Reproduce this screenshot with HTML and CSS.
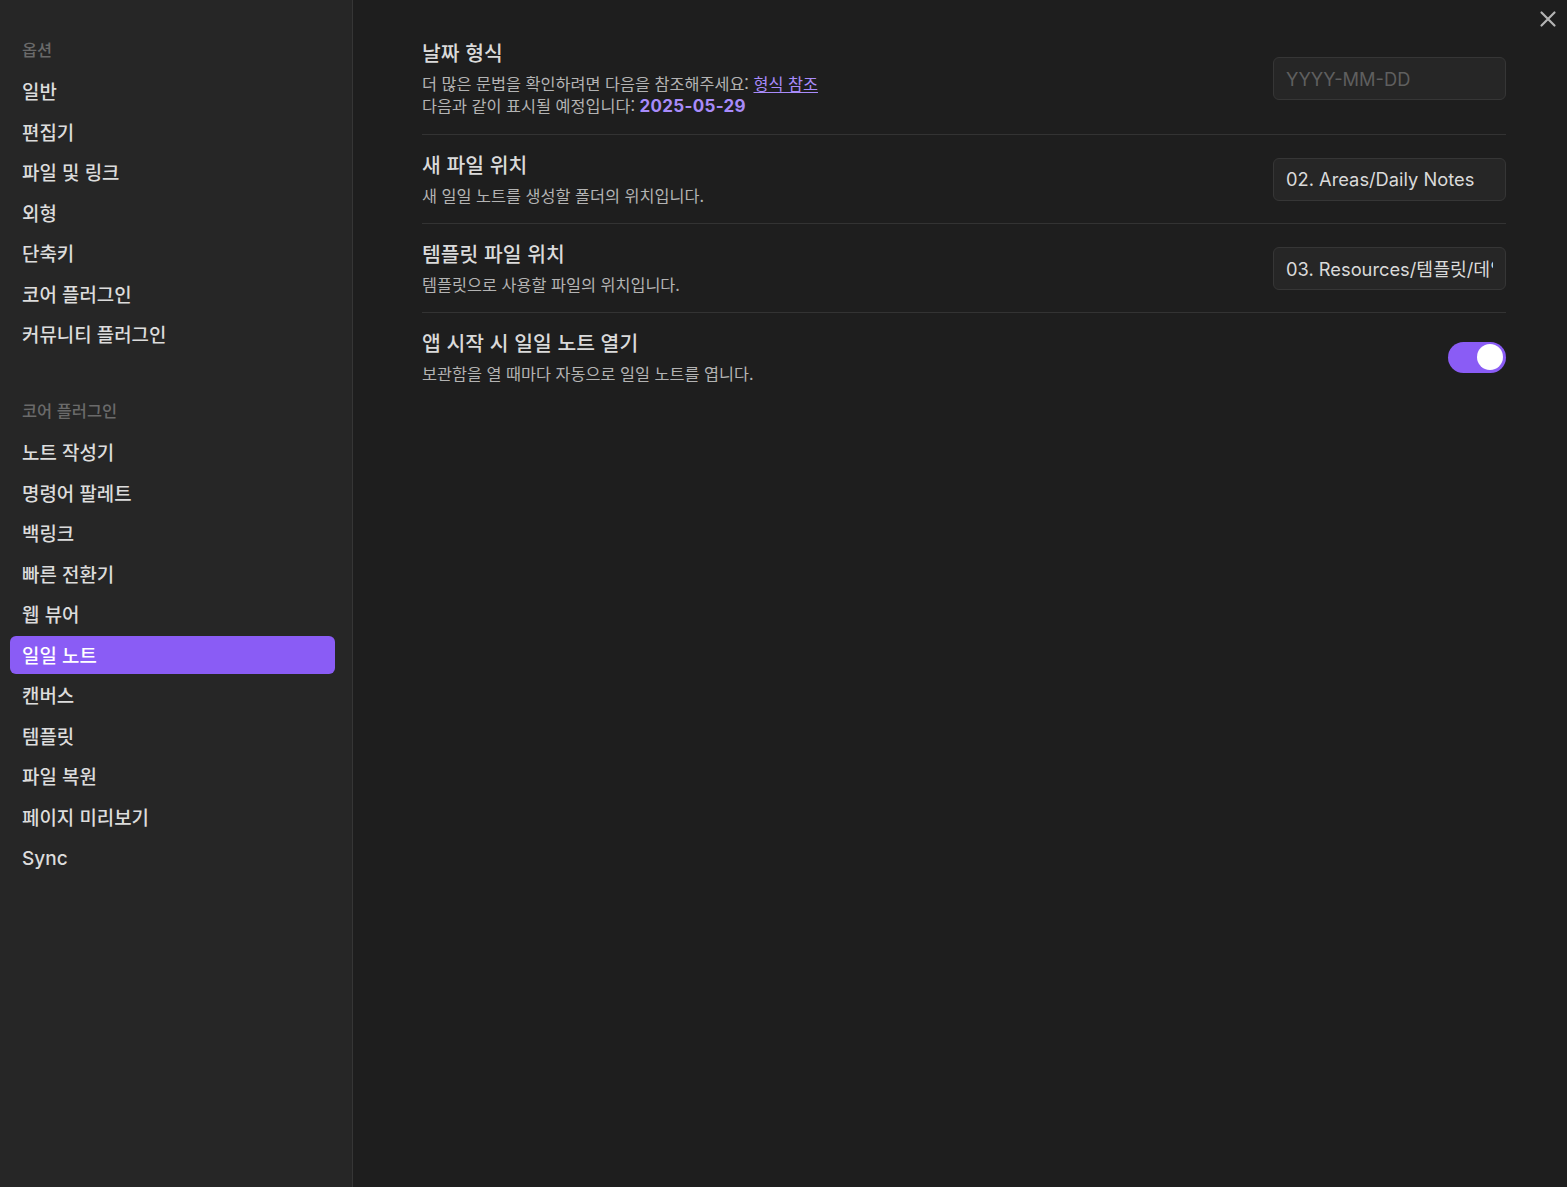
FILE: index.html
```html
<!DOCTYPE html>
<html lang="ko">
<head>
<meta charset="utf-8">
<title>설정 - 일일 노트</title>
<link rel="stylesheet" href="styles.css">
</head>
<body>
<div class="modal">
  <nav class="sidebar">
    <div class="nav-group">
      <div class="nav-header">옵션</div>
      <div class="nav-item">일반</div>
      <div class="nav-item">편집기</div>
      <div class="nav-item">파일 및 링크</div>
      <div class="nav-item">외형</div>
      <div class="nav-item">단축키</div>
      <div class="nav-item">코어 플러그인</div>
      <div class="nav-item">커뮤니티 플러그인</div>
    </div>
    <div class="nav-group">
      <div class="nav-header">코어 플러그인</div>
      <div class="nav-item">노트 작성기</div>
      <div class="nav-item">명령어 팔레트</div>
      <div class="nav-item">백링크</div>
      <div class="nav-item">빠른 전환기</div>
      <div class="nav-item">웹 뷰어</div>
      <div class="nav-item is-active">일일 노트</div>
      <div class="nav-item">캔버스</div>
      <div class="nav-item">템플릿</div>
      <div class="nav-item">파일 복원</div>
      <div class="nav-item">페이지 미리보기</div>
      <div class="nav-item latin">Sync</div>
    </div>
  </nav>
  <main class="content">
    <div class="setting">
      <div class="setting-info">
        <div class="setting-name">날짜 형식</div>
        <div class="setting-desc">더 많은 문법을 확인하려면 다음을 참조해주세요: <a class="link" href="#">형식 참조</a><br>다음과 같이 표시될 예정입니다: <b class="accent">2025-05-29</b></div>
      </div>
      <input class="text-input" type="text" placeholder="YYYY-MM-DD">
    </div>
    <div class="setting">
      <div class="setting-info">
        <div class="setting-name">새 파일 위치</div>
        <div class="setting-desc">새 일일 노트를 생성할 폴더의 위치입니다.</div>
      </div>
      <input class="text-input" type="text" value="02. Areas/Daily Notes">
    </div>
    <div class="setting">
      <div class="setting-info">
        <div class="setting-name">템플릿 파일 위치</div>
        <div class="setting-desc">템플릿으로 사용할 파일의 위치입니다.</div>
      </div>
      <input class="text-input" type="text" value="03. Resources/템플릿/데일리 노트 템플릿">
    </div>
    <div class="setting last">
      <div class="setting-info">
        <div class="setting-name">앱 시작 시 일일 노트 열기</div>
        <div class="setting-desc">보관함을 열 때마다 자동으로 일일 노트를 엽니다.</div>
      </div>
      <div class="toggle is-on"><div class="knob"></div></div>
    </div>
  </main>
  <button class="close" aria-label="닫기">
    <svg width="18" height="18" viewBox="0 0 18 18"><path d="M2.5 2.5 L15.5 15.5 M15.5 2.5 L2.5 15.5" stroke="#b4b4b4" stroke-width="2.2" stroke-linecap="round"/></svg>
  </button>
</div>
</body>
</html>
```

FILE: styles.css
```css
* { box-sizing: border-box; }
html, body {
  margin: 0;
  height: 100%;
  background: #1e1e1e;
}
body {
  font-family: "Inter", "Noto Sans CJK KR", sans-serif;
  color: #dadada;
}
.modal {
  position: relative;
  display: flex;
  height: 1187px;
  overflow: hidden;
}
.sidebar {
  width: 353px;
  flex-shrink: 0;
  background: #262626;
  border-right: 1px solid #363636;
  padding: 37px 17px 0 10px;
}
.nav-group + .nav-group {
  margin-top: 45px;
}
.nav-header {
  font-family: "Noto Sans CJK KR", sans-serif;
  font-size: 16.4px;
  line-height: 24px;
  color: #6a6a6a;
  padding: 0 12px;
  margin-bottom: 11px;
  font-weight: 500;
}
.nav-item {
  font-family: "Noto Sans CJK KR", sans-serif;
  font-size: 18.9px;
  height: 38px;
  line-height: 38px;
  padding: 0 12px;
  margin-bottom: 2.5px;
  border-radius: 6px;
  color: #dcdcdc;
  font-weight: 500;
}
.nav-item.latin {
  font-family: "Inter", sans-serif;
  font-size: 19px;
  margin-top: 4px;
}
.nav-item.is-active {
  background: #8a5cf5;
  color: #ffffff;
}
.content {
  flex: 1;
  padding: 23px 61px 0 69px;
}
.setting {
  display: flex;
  align-items: center;
  justify-content: space-between;
  padding: 17px 0 17px;
  border-bottom: 1px solid #333333;
}
.setting.last {
  border-bottom: none;
}
.setting-name {
  font-family: "Noto Sans CJK KR", sans-serif;
  font-size: 20.4px;
  line-height: 24px;
  font-weight: 500;
  color: #dadada;
  margin-bottom: 8px;
}
.setting-desc {
  font-family: "Noto Sans CJK KR", sans-serif;
  font-size: 16.3px;
  line-height: 22px;
  color: #b3b3b3;
}
.link {
  color: #a88bfa;
  text-decoration: underline;
  text-underline-offset: 2px;
}
.accent {
  color: #a88bfa;
  font-family: "Inter", sans-serif;
  font-weight: 700;
  font-size: 17px;
  letter-spacing: 0.3px;
}
.text-input {
  width: 233px;
  height: 43px;
  flex-shrink: 0;
  background: #262626;
  border: 1px solid #363636;
  border-radius: 6px;
  padding: 0 12px;
  font-family: "Inter", "Noto Sans CJK KR", sans-serif;
  font-size: 18.3px;
  color: #dadada;
  outline: none;
}
.text-input::placeholder {
  color: #5f5f5f;
}
.toggle {
  width: 58px;
  height: 31px;
  border-radius: 16px;
  background: #8a5cf5;
  flex-shrink: 0;
  display: flex;
  align-items: center;
  justify-content: flex-end;
  padding: 0 3px;
}
.knob {
  width: 26px;
  height: 26px;
  border-radius: 50%;
  background: #ffffff;
}
.close {
  position: absolute;
  top: 10px;
  right: 10px;
  width: 18px;
  height: 18px;
  padding: 0;
  border: none;
  background: transparent;
}
.close svg { display: block; }
```
